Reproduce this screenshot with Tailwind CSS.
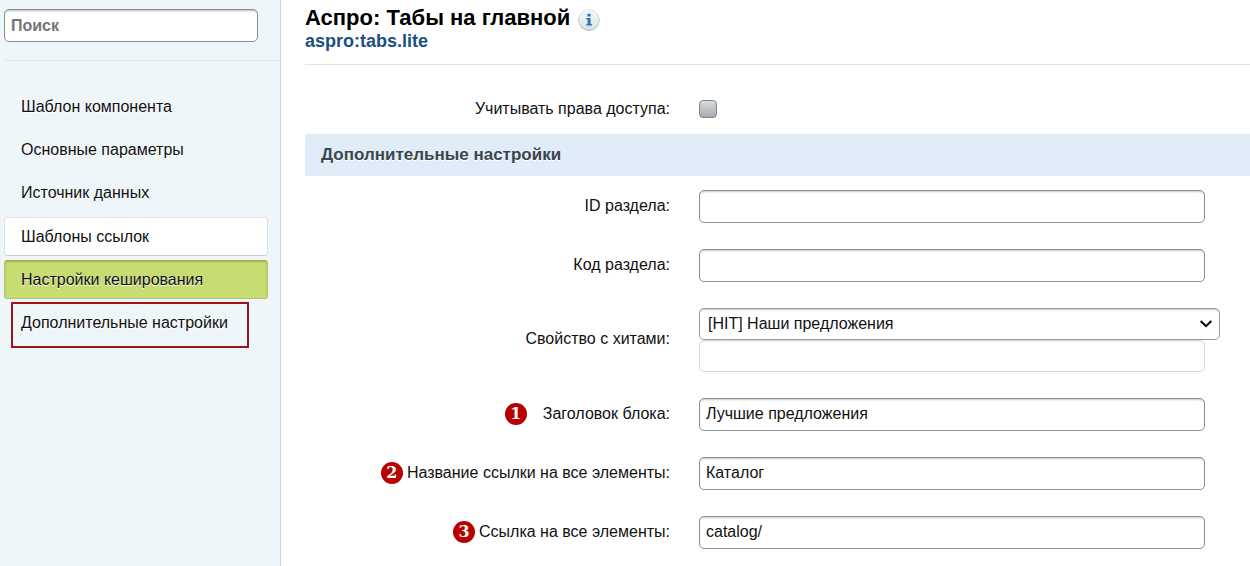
<!DOCTYPE html>
<html lang="ru">
  <head>
    <meta charset="UTF-8" />
    <meta name="viewport" content="width=device-width, initial-scale=1.0" />
    <title>Аспро: Табы на главной</title>
    <script src="https://cdn.jsdelivr.net/npm/@tailwindcss/browser@4"></script>
  </head>
  <body class="flex min-h-screen bg-white font-['Liberation_Sans',Arial,sans-serif] text-base text-[#111111]">
    <!-- Sidebar -->
    <aside class="w-[281px] shrink-0 border-r border-[#c9d2d8] bg-[#eff6fa] pl-1">
      <div class="border-b border-[#e0e8ea] pt-[9px] pb-[18px]">
        <input
          type="text"
          aria-label="Поиск"
          placeholder="Поиск"
          class="block h-[33px] w-[254px] rounded-[5px] border border-[#87919c] bg-white px-1.5 font-bold shadow-[inset_0_2px_2px_-1px_#b4bbbf] placeholder:text-[#757575]"
        />
      </div>
      <nav class="mt-[26px] mr-3 flex flex-col gap-1 [text-shadow:0_1px_0_#ffffff]">
        <a href="#template" class="flex h-[39px] items-center px-[17px]">Шаблон компонента</a>
        <a href="#main" class="flex h-[39px] items-center px-[17px]">Основные параметры</a>
        <a href="#source" class="flex h-[39px] items-center px-[17px]">Источник данных</a>
        <a href="#links" class="mt-px flex h-[39px] items-center rounded-[3px] border border-[#dde5ea] border-b-[#c3ced6] bg-white px-4">Шаблоны ссылок</a>
        <a href="#cache" class="flex h-[39px] items-center rounded-[3px] border border-[#b4c76d] border-t-[#9bb050] bg-[#c8dc74] px-4 shadow-[inset_0_1px_2px_#9bb050]">Настройки кеширования</a>
        <a href="#extra" class="relative flex h-[39px] items-center px-[17px]">
          Дополнительные настройки
          <span class="absolute -top-px right-[19px] -bottom-1.5 left-[7px] border-2 border-[#a01418]"></span>
        </a>
      </nav>
    </aside>

    <!-- Content -->
    <main class="min-w-0 flex-1 pl-6">
      <header class="h-[65px] border-b border-[#dfe2e4] pt-1">
        <div class="flex items-center gap-2">
          <h1 class="text-[22px] leading-7 font-bold text-black">Аспро: Табы на главной</h1>
          <button type="button" aria-label="Информация" class="mt-1">
            <svg class="size-[22px]" viewBox="0 0 22 22">
              <defs>
                <linearGradient id="info" x1="0" y1="0" x2="0" y2="1">
                  <stop offset="0" stop-color="#f6f9fa" />
                  <stop offset="1" stop-color="#d9e1e4" />
                </linearGradient>
              </defs>
              <circle cx="11" cy="11.3" r="10.6" fill="#a5adb2" />
              <circle cx="11" cy="10.7" r="10.2" fill="url(#info)" stroke="#d3dadd" stroke-width="0.6" />
              <path d="M9.4 4.800h3.200v2.700h-3.200zM8.300 9h4.300v6H14v1.500H8.300V15h1.300v-4.500H8.300z" fill="#3277bd" />
            </svg>
          </button>
        </div>
        <p class="text-lg leading-[18px] font-bold text-[#1c5080]">aspro:tabs.lite</p>
      </header>

      <form>
        <div class="flex h-[69px] items-center gap-[29px] pt-[18px]">
          <label for="rights" class="w-[365px] shrink-0 text-right">Учитывать права доступа:</label>
          <input
            type="checkbox"
            id="rights"
            class="size-[18px] appearance-none rounded-[4px] border border-[#7c868b] bg-linear-to-b from-[#d8dcdf] to-[#a5abb0]"
          />
        </div>
        <h2 class="flex h-[42px] items-center bg-[#e0ecf7] px-4 text-[17px] font-bold text-[#3a464d] [text-shadow:0_1px_0_#ffffff]">
          Дополнительные настройки
        </h2>

        <div class="flex flex-col gap-[26px] pt-[14px] pr-[45px] pb-4">
          <div class="flex items-center gap-[29px]">
            <label for="sectionId" class="w-[365px] shrink-0 pb-0.5 text-right">ID раздела:</label>
            <input
              type="text"
              id="sectionId"
              class="h-[33px] w-full min-w-0 rounded-[5px] border border-[#87919c] bg-white px-1.5 pb-0.5 shadow-[inset_0_2px_2px_-1px_#c4cbcf]"
            />
          </div>
          <div class="flex items-center gap-[29px]">
            <label for="sectionCode" class="w-[365px] shrink-0 pb-0.5 text-right">Код раздела:</label>
            <input
              type="text"
              id="sectionCode"
              class="h-[33px] w-full min-w-0 rounded-[5px] border border-[#87919c] bg-white px-1.5 pb-0.5 shadow-[inset_0_2px_2px_-1px_#c4cbcf]"
            />
          </div>
          <div class="flex items-center gap-[29px]">
            <label for="hitProp" class="w-[365px] shrink-0 pb-0.5 text-right">Свойство с хитами:</label>
            <div class="min-w-0 flex-1">
              <div class="relative -mr-[15px]">
                <select
                  id="hitProp"
                  class="block h-8 w-full appearance-none rounded-[5px] border border-[#959b9b] bg-white px-2 shadow-[inset_0_2px_2px_-1px_#c4cbcf]"
                >
                  <option>[HIT] Наши предложения</option>
                </select>
                <svg class="pointer-events-none absolute top-3 right-2 h-2 w-3" viewBox="0 0 12 8" fill="none" stroke="#000000" stroke-width="2">
                  <path d="M0.700 1L6 6.200L11.300 1" />
                </svg>
              </div>
              <input
                type="text"
                aria-label="Другое значение"
                disabled
                class="block h-8 w-full rounded-[5px] border border-[#d5dadd] bg-white px-1.5 shadow-[inset_0_2px_2px_-1px_#edf0f2]"
              />
            </div>
          </div>
          <div class="flex items-center gap-[29px]">
            <div class="flex w-[365px] shrink-0 items-center justify-end gap-4 pb-0.5">
              <span class="flex size-[22px] items-center justify-center rounded-full bg-[#b80000] font-['DejaVu_Serif',serif] text-base leading-none font-bold text-white">1</span>
              <label for="blockTitle">Заголовок блока:</label>
            </div>
            <input
              type="text"
              id="blockTitle"
              value="Лучшие предложения"
              class="h-[33px] w-full min-w-0 rounded-[5px] border border-[#87919c] bg-white px-1.5 pb-0.5 shadow-[inset_0_2px_2px_-1px_#c4cbcf]"
            />
          </div>
          <div class="flex items-center gap-[29px]">
            <div class="flex w-[365px] shrink-0 items-center justify-end gap-1 pb-0.5">
              <span class="flex size-[22px] items-center justify-center rounded-full bg-[#b80000] font-['DejaVu_Serif',serif] text-base leading-none font-bold text-white">2</span>
              <label for="linkName">Название ссылки на все элементы:</label>
            </div>
            <input
              type="text"
              id="linkName"
              value="Каталог"
              class="h-[33px] w-full min-w-0 rounded-[5px] border border-[#87919c] bg-white px-1.5 pb-0.5 shadow-[inset_0_2px_2px_-1px_#c4cbcf]"
            />
          </div>
          <div class="flex items-center gap-[29px]">
            <div class="flex w-[365px] shrink-0 items-center justify-end gap-1 pb-0.5">
              <span class="flex size-[22px] items-center justify-center rounded-full bg-[#b80000] font-['DejaVu_Serif',serif] text-base leading-none font-bold text-white">3</span>
              <label for="linkUrl">Ссылка на все элементы:</label>
            </div>
            <input
              type="text"
              id="linkUrl"
              value="catalog/"
              class="h-[33px] w-full min-w-0 rounded-[5px] border border-[#87919c] bg-white px-1.5 pb-0.5 shadow-[inset_0_2px_2px_-1px_#c4cbcf]"
            />
          </div>
        </div>
      </form>
    </main>
  </body>
</html>
